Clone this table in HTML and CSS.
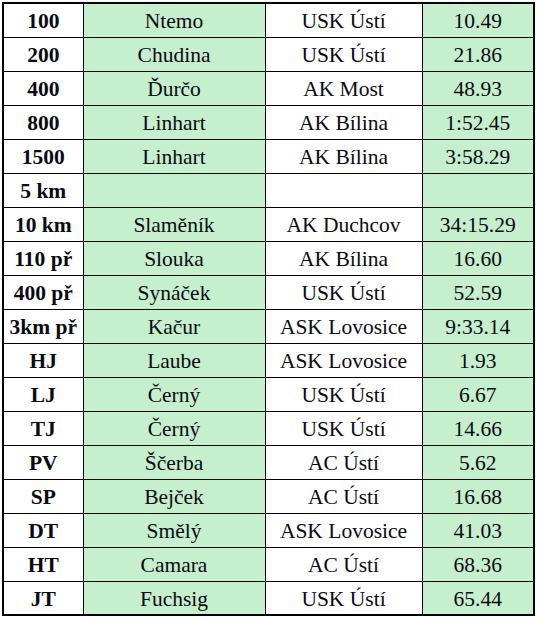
FILE: index.html
```html
<!DOCTYPE html>
<html lang="cs">
<head>
<meta charset="utf-8">
<title>Rekordy</title>
<link rel="stylesheet" href="styles.css">
</head>
<body>
<table class="records">
<colgroup><col class="c1"><col class="c2"><col class="c3"><col class="c4"></colgroup>
<tbody>
<tr><th>100</th><td class="g">Ntemo</td><td>USK Ústí</td><td class="g">10.49</td></tr>
<tr><th>200</th><td class="g">Chudina</td><td>USK Ústí</td><td class="g">21.86</td></tr>
<tr><th>400</th><td class="g">Ďurčo</td><td>AK Most</td><td class="g">48.93</td></tr>
<tr><th>800</th><td class="g">Linhart</td><td>AK Bílina</td><td class="g">1:52.45</td></tr>
<tr><th>1500</th><td class="g">Linhart</td><td>AK Bílina</td><td class="g">3:58.29</td></tr>
<tr><th>5 km</th><td class="g"></td><td></td><td class="g"></td></tr>
<tr><th>10 km</th><td class="g">Slaměník</td><td>AK Duchcov</td><td class="g">34:15.29</td></tr>
<tr><th>110 př</th><td class="g">Slouka</td><td>AK Bílina</td><td class="g">16.60</td></tr>
<tr><th>400 př</th><td class="g">Synáček</td><td>USK Ústí</td><td class="g">52.59</td></tr>
<tr><th>3km př</th><td class="g">Kačur</td><td>ASK Lovosice</td><td class="g">9:33.14</td></tr>
<tr><th>HJ</th><td class="g">Laube</td><td>ASK Lovosice</td><td class="g">1.93</td></tr>
<tr><th>LJ</th><td class="g">Černý</td><td>USK Ústí</td><td class="g">6.67</td></tr>
<tr><th>TJ</th><td class="g">Černý</td><td>USK Ústí</td><td class="g">14.66</td></tr>
<tr><th>PV</th><td class="g">Ščerba</td><td>AC Ústí</td><td class="g">5.62</td></tr>
<tr><th>SP</th><td class="g">Bejček</td><td>AC Ústí</td><td class="g">16.68</td></tr>
<tr><th>DT</th><td class="g">Smělý</td><td>ASK Lovosice</td><td class="g">41.03</td></tr>
<tr><th>HT</th><td class="g">Camara</td><td>AC Ústí</td><td class="g">68.36</td></tr>
<tr><th>JT</th><td class="g">Fuchsig</td><td>USK Ústí</td><td class="g">65.44</td></tr>
</tbody>
</table>
</body>
</html>
```
FILE: styles.css
```css
html, body {
  margin: 0;
  padding: 0;
  background: #fff;
}
body {
  padding: 2px 0 0 2px;
  font-family: "Liberation Serif", Tinos, "Times New Roman", "DejaVu Serif", serif;
}
.records {
  border-collapse: collapse;
  table-layout: fixed;
  width: 533px;
  border: 2px solid #000;
  font-family: "Liberation Serif", Tinos, "Times New Roman", "DejaVu Serif", serif;
  font-size: 21.5px;
  color: #0a0a14;
}
.c1 { width: 80px; }
.c2 { width: 182px; }
.c3 { width: 157px; }
.c4 { width: 112px; }
.records th,
.records td {
  border: 1px solid #000;
  height: 34px;
  padding: 3px 0 0 0;
  text-align: center;
  vertical-align: middle;
  white-space: nowrap;
  box-sizing: border-box;
  font-family: inherit;
}
.records th {
  font-weight: bold;
  background: #fff;
}
.records td {
  font-weight: normal;
  background: #fff;
}
.records td.g {
  background: #c6efce;
}
```
